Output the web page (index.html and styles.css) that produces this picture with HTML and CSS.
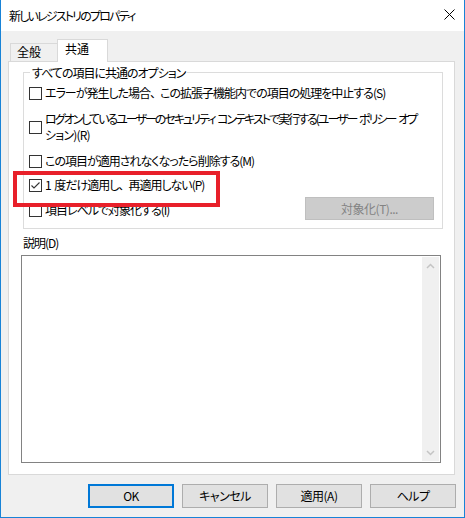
FILE: index.html
```html
<!DOCTYPE html>
<html lang="ja">
<head>
<meta charset="utf-8">
<link rel="stylesheet" href="styles.css">
</head>
<body>
<div class="window">
  <div class="titlebar">
    <span class="title">新しいレジストリのプロパティ</span>
    <svg class="close" width="11" height="11" viewBox="0 0 11 11"><path d="M0.5 0.5 L10.5 10.5 M10.5 0.5 L0.5 10.5" stroke="#000" stroke-width="1" fill="none"/></svg>
  </div>
  <div class="client">
    <div class="tabs">
      <div class="tab">全般</div>
      <div class="tab tab-active">共通</div>
    </div>
    <div class="panel">
      <fieldset class="group">
        <legend class="legend">すべての項目に共通のオプション</legend>
        <div class="row row1"><span class="cb"></span><span class="label">エラーが発生した場合<span class="comma">、</span>この拡張子機能内での項目の処理を中止する(S)</span></div>
        <div class="row row2"><span class="cb"></span><span class="label label2">ログオンしているユーザーのセキュリティ コンテキストで実行する(ユーザー ポリシー オプ<br><span class="line2">ション)(R)</span></span></div>
        <div class="row row3"><span class="cb"></span><span class="label">この項目が適用されなくなったら削除する(M)</span></div>
        <div class="row row4"><span class="cb"><svg width="11" height="11" viewBox="0 0 11 11"><path d="M1.5 5.5 L4 8 L9.5 2.5" stroke="#333" stroke-width="1.1" fill="none"/></svg></span><span class="label">1 度だけ適用し<span class="comma">、</span>再適用しない(P)</span></div>
        <div class="row row5"><span class="cb"></span><span class="label label5">項目レベルで対象化する(I)</span><span class="btn btn-disabled">対象化(T)...</span></div>
      </fieldset>
      <div class="desc-label">説明(D)</div>
      <div class="desc">
        <div class="desc-text"></div>
        <div class="scrollbar">
          <svg width="9" height="6" viewBox="0 0 9 6"><path d="M1 5 L4.5 1.5 L8 5" stroke="#c4c4c4" stroke-width="1.5" fill="none"/></svg>
          <svg width="9" height="6" viewBox="0 0 9 6"><path d="M1 1 L4.5 4.5 L8 1" stroke="#c4c4c4" stroke-width="1.5" fill="none"/></svg>
        </div>
      </div>
    </div>
    <div class="buttons">
      <span class="btn btn-default">OK</span>
      <span class="btn">キャンセル</span>
      <span class="btn">適用(A)</span>
      <span class="btn">ヘルプ</span>
    </div>
  </div>
  <div class="highlight"></div>
</div>
</body>
</html>
```

FILE: styles.css
```css
* { box-sizing: border-box; }
html, body { margin: 0; padding: 0; }
body {
  font-family: "Noto Sans CJK JP", "Noto Sans", sans-serif;
  font-size: 12px;
  line-height: 15px;
  color: #000;
  font-feature-settings: "palt";
  letter-spacing: -1px;
  word-spacing: 2px;
}
.window {
  position: relative;
  width: 465px;
  height: 518px;
  border: 1px solid #1883d7;
  border-top: none;
  display: flex;
  flex-direction: column;
  background: #f0f0f0;
}
.titlebar {
  height: 31px;
  background: #fff;
  display: flex;
  align-items: center;
  justify-content: space-between;
  padding: 0 9px 1px 8px;
}
.title { letter-spacing: -1.8px; }
.close { display: block; margin-top: -1px; }
.client {
  flex: 1;
  padding: 8px 0 0 7px;
}
.tabs {
  display: flex;
  align-items: flex-end;
  height: 22px;
  margin-left: 2px;
}
.tab {
  height: 18px;
  width: 47px;
  border: 1px solid #d9d9d9;
  border-right: none;
  border-bottom: none;
  background: #f0f0f0;
  padding: 0 0 0 6px;
  letter-spacing: 0;
}
.tab-active {
  position: relative;
  z-index: 1;
  height: 23px;
  width: 51px;
  border-right: 1px solid #d9d9d9;
  background: #fff;
  margin-bottom: -1px;
  padding: 1px 0 0 7px;
}
.panel {
  width: 447px;
  height: 414px;
  border: 1px solid #d9d9d9;
  background: #fff;
  padding: 0;
}
.group {
  margin: 3px 0 0 14px;
  width: 420px;
  border: 1px solid #dcdcdc;
  padding: 0 5px 8px 5px;
}
.legend {
  padding: 0 2px;
  margin-left: 1px;
  line-height: 15px;
}
.row {
  display: flex;
  align-items: center;
  white-space: nowrap;
}
.row1 { margin-top: 5px; }
.row2 { margin-top: 11px; }
.row3 { margin-top: 10px; }
.row4 { margin-top: 9px; }
.row5 { margin-top: 5px; height: 23px; }
.cb {
  flex: none;
  width: 13px;
  height: 13px;
  border: 1px solid #333;
  background: #fff;
  display: flex;
  align-items: center;
  justify-content: center;
}
.row1 .cb, .row3 .cb, .row4 .cb { margin-top: 2px; }
.cb svg { display: block; }
.label { margin-left: 3px; }
.label2 { letter-spacing: -2px; line-height: 16px; }
.line2 { letter-spacing: -0.8px; }
.comma { padding-right: 5px; }
.label5 { margin-top: 1px; }
.row5 .cb { margin-top: 4px; }
.btn {
  display: flex;
  align-items: center;
  justify-content: center;
  width: 86px;
  height: 24px;
  background: #e1e1e1;
  border: 1px solid #adadad;
  padding-bottom: 1px;
  letter-spacing: -0.5px;
}
.btn-disabled {
  margin-left: auto;
  margin-right: 3px;
  width: 129px;
  height: 23px;
  background: #cccccc;
  border-color: #bfbfbf;
  color: #838383;
}
.desc-label {
  margin: 6px 0 0 14px;
}
.desc {
  margin: 5px 0 0 12px;
  width: 420px;
  height: 208px;
  border: 1px solid #828282;
  padding: 1px;
  display: flex;
}
.desc-text { flex: 1; }
.scrollbar {
  width: 17px;
  background: #f0f0f0;
  display: flex;
  flex-direction: column;
  align-items: center;
  justify-content: space-between;
  padding: 6px 0 5px 0;
}
.scrollbar svg { display: block; }
.buttons {
  display: flex;
  gap: 8px;
  margin-top: 9px;
  padding-left: 80px;
}
.btn-default {
  border: 2px solid #0078d7;
}
.highlight {
  position: absolute;
  left: 12px;
  top: 171px;
  width: 207px;
  height: 36px;
  border: 4px solid #e8202a;
}
```
